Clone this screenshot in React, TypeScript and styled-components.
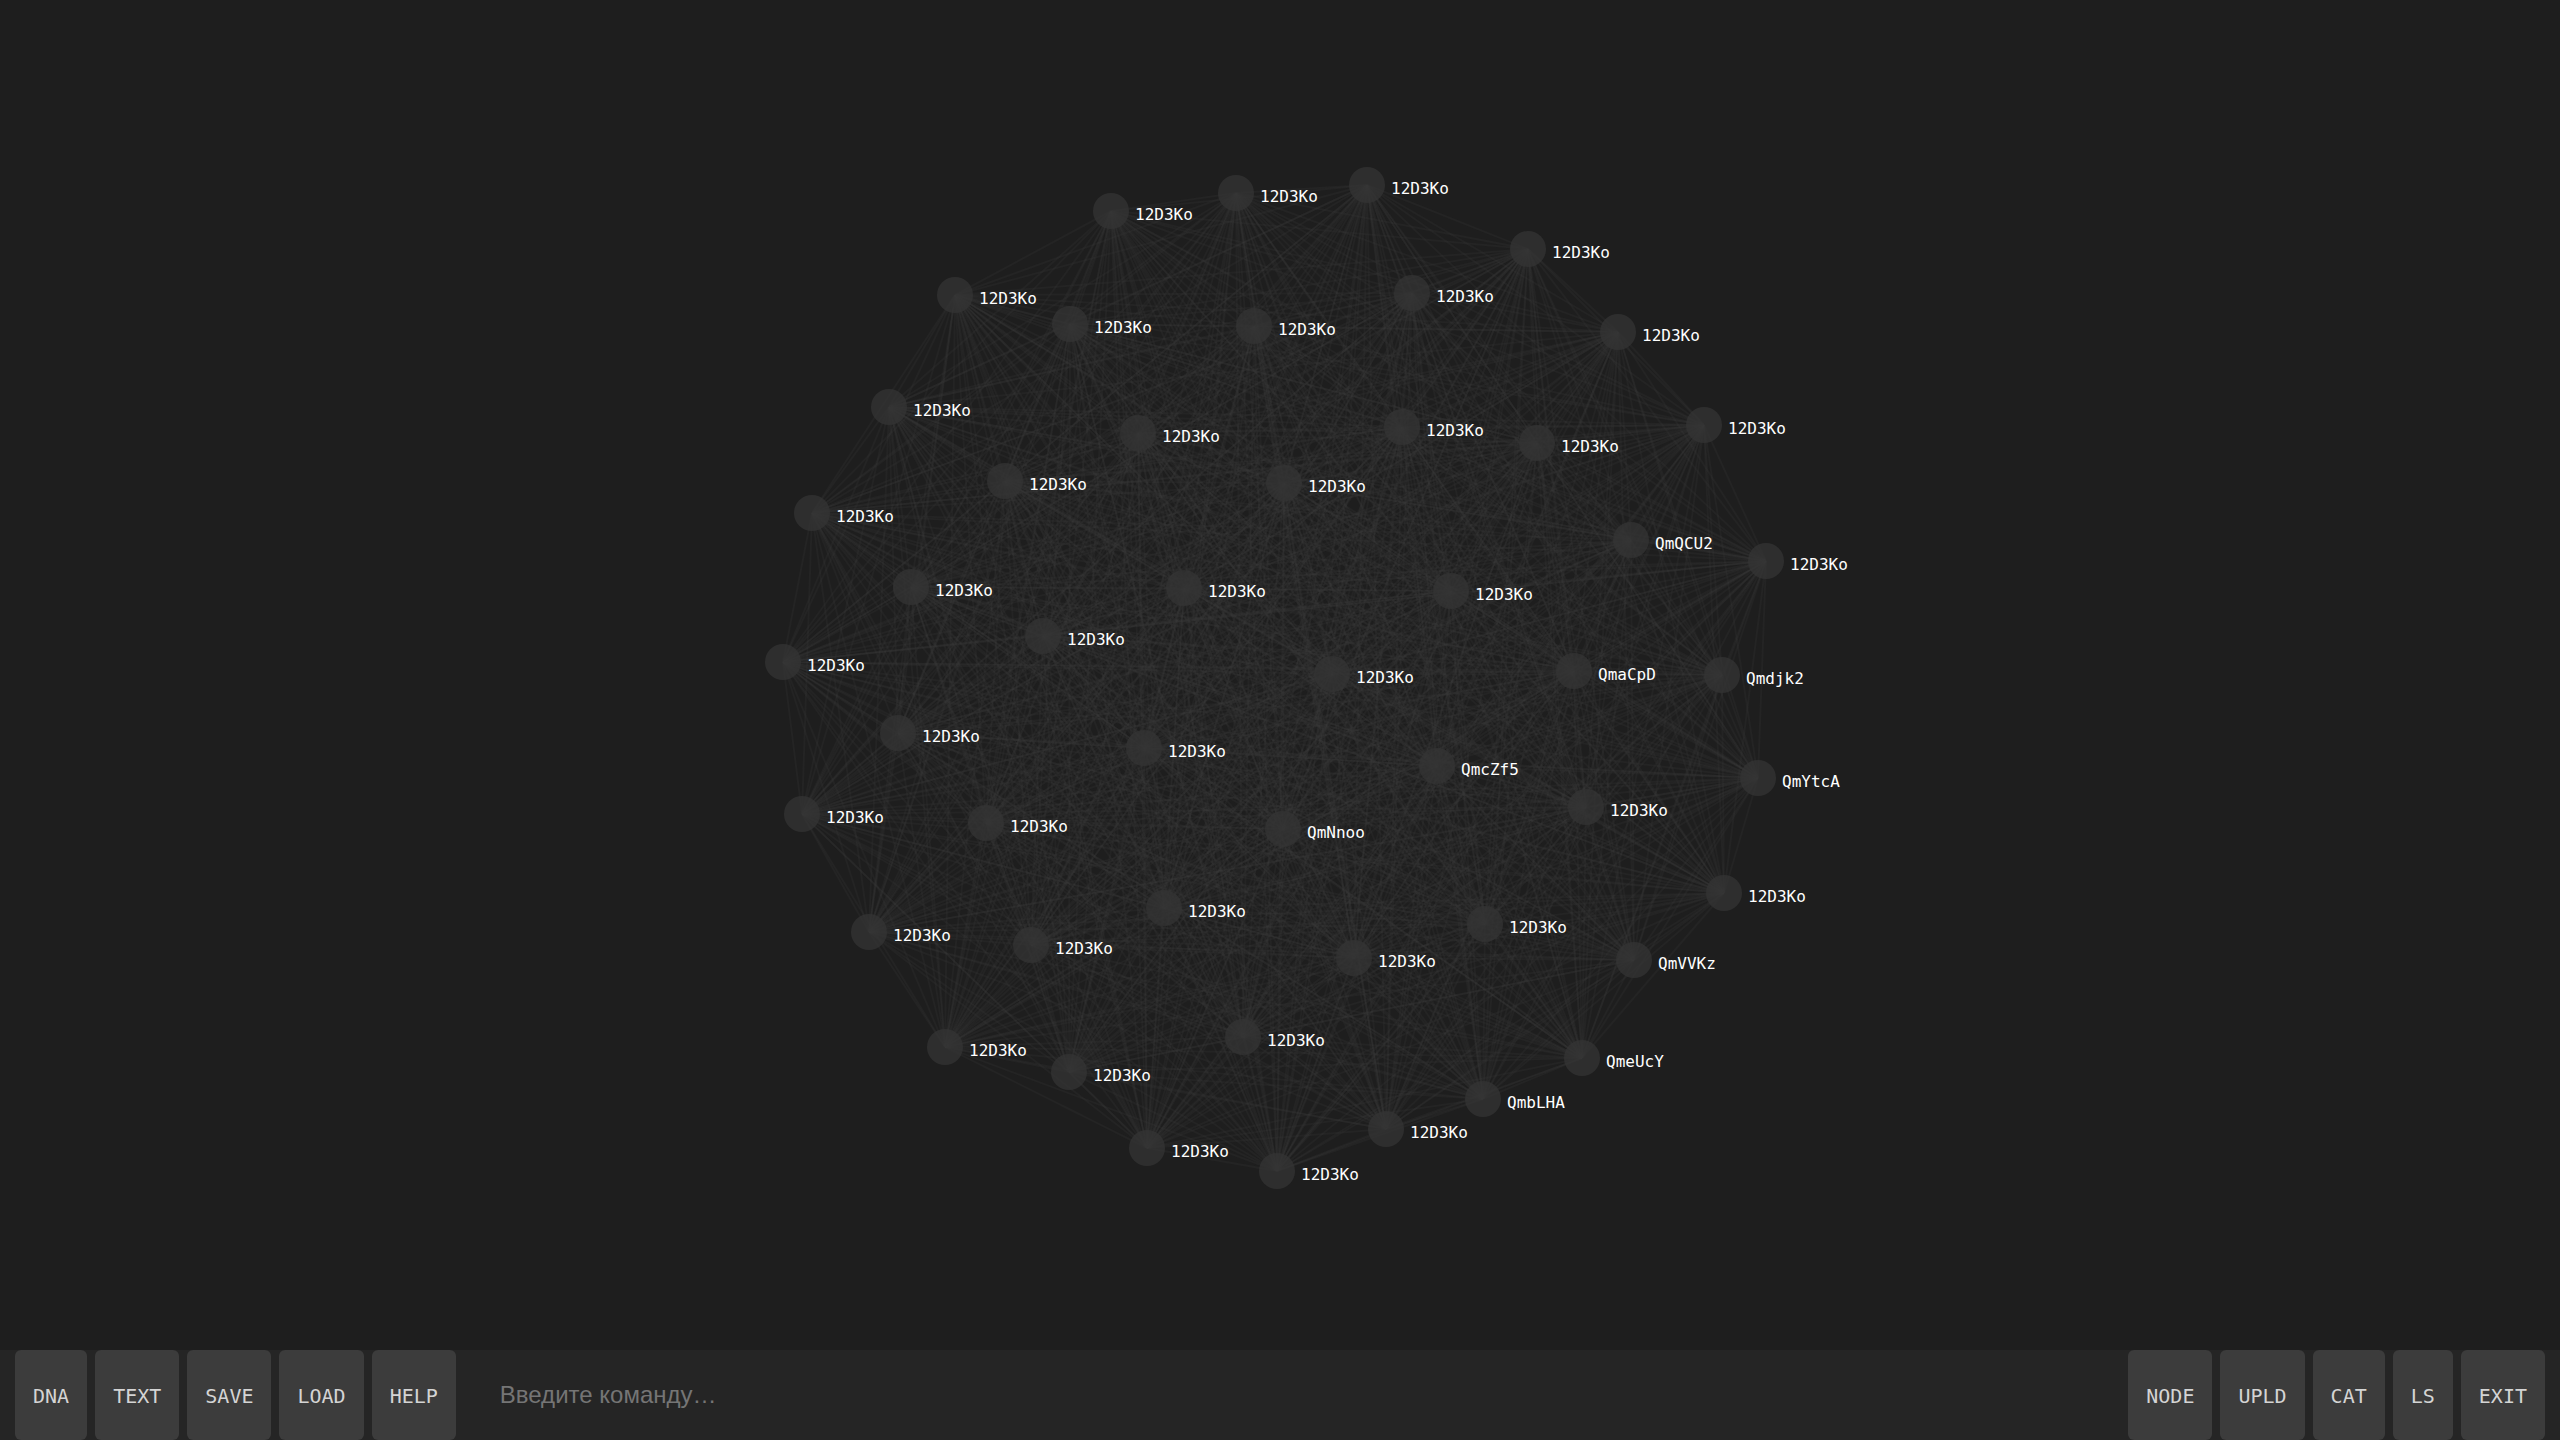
import React from "react";
import styled, { createGlobalStyle } from "styled-components";

const GlobalStyle = createGlobalStyle`
  body { margin: 0; background: #1e1e1e; }
  * { box-sizing: border-box; }
`;

const Page = styled.div`
  display: flex;
  flex-direction: column;
  height: 100vh;
  overflow: hidden;
  background: #1e1e1e;
`;

const GraphPane = styled.main`
  flex: 1;
  min-height: 0;
`;

const Graph = styled.svg`
  display: block;
  width: 100%;
  height: 100%;
`;

const Edge = styled.line`
  stroke: #3c3c3c;
  stroke-opacity: 0.2;
  stroke-width: 2;
`;

const NodeDot = styled.circle`
  fill: #343434;
  fill-opacity: 0.75;
`;

const NodeLabel = styled.text`
  font: 16px "DejaVu Sans Mono", "Liberation Mono", monospace;
  fill: #ffffff;
`;

const CommandBar = styled.footer`
  display: flex;
  align-items: stretch;
  height: 90px;
  padding: 0 15px;
  background: #252525;
`;

const ButtonGroup = styled.div`
  display: flex;
  gap: 8px;
`;

const BarButton = styled.button`
  padding: 2px 18px 0;
  border: 0;
  border-radius: 6px;
  background: #3c3c3c;
  color: #d4d4d4;
  font: 20px "DejaVu Sans Mono", "Liberation Mono", monospace;
  cursor: pointer;
`;

const CommandInput = styled.input`
  flex: 1;
  min-width: 0;
  padding: 0 44px;
  border: 0;
  outline: 0;
  background: transparent;
  color: #cccccc;
  font: 24px "Liberation Sans", Arial, sans-serif;
  &::placeholder { color: #757575; opacity: 1; }
`;

type Peer = [x: number, y: number, id?: string];

const DEFAULT_ID = "12D3Ko";

const peers: Peer[] = [
  [1111, 211], [1236, 193], [1367, 185], [1528, 249], [955, 295],
  [1070, 324], [1254, 326], [1412, 293], [1618, 332], [889, 407],
  [1138, 433], [1402, 427], [1537, 443], [1704, 425], [1005, 481],
  [1284, 483], [812, 513], [1631, 540, "QmQCU2"], [1766, 561], [911, 587],
  [1184, 588], [1451, 591], [1043, 636], [783, 662], [1332, 674],
  [1574, 671, "QmaCpD"], [1722, 675, "Qmdjk2"], [898, 733], [1144, 748], [1437, 766, "QmcZf5"],
  [1758, 778, "QmYtcA"], [802, 814], [986, 823], [1283, 829, "QmNnoo"], [1586, 807],
  [1724, 893], [869, 932], [1164, 908], [1485, 924], [1031, 945],
  [1354, 958], [1634, 960, "QmVVKz"], [945, 1047], [1069, 1072], [1243, 1037],
  [1582, 1058, "QmeUcY"], [1483, 1099, "QmbLHA"], [1147, 1148], [1277, 1171], [1386, 1129],
];

const edges = peers.flatMap((from, i) =>
  peers.slice(i + 1).map((to) => ({ from, to }))
);

function PeerGraph() {
  return (
    <Graph viewBox="0 0 2560 1350" role="img" aria-label="Peers">
      {edges.map(({ from, to }, i) => (
        <Edge key={i} x1={from[0]} y1={from[1]} x2={to[0]} y2={to[1]} />
      ))}
      {peers.map(([x, y], i) => (
        <NodeDot key={i} cx={x} cy={y} r={18} />
      ))}
      {peers.map(([x, y, id = DEFAULT_ID], i) => (
        <NodeLabel key={i} x={x + 24} y={y + 9}>{id}</NodeLabel>
      ))}
    </Graph>
  );
}

export default function App() {
  return (
    <Page>
      <GlobalStyle />
      <GraphPane>
        <PeerGraph />
      </GraphPane>
      <CommandBar>
        <ButtonGroup>
          {["DNA", "TEXT", "SAVE", "LOAD", "HELP"].map((name) => (
            <BarButton key={name} type="button">{name}</BarButton>
          ))}
        </ButtonGroup>
        <CommandInput type="text" aria-label="Введите команду" placeholder="Введите команду…" />
        <ButtonGroup>
          {["NODE", "UPLD", "CAT", "LS", "EXIT"].map((name) => (
            <BarButton key={name} type="button">{name}</BarButton>
          ))}
        </ButtonGroup>
      </CommandBar>
    </Page>
  );
}
